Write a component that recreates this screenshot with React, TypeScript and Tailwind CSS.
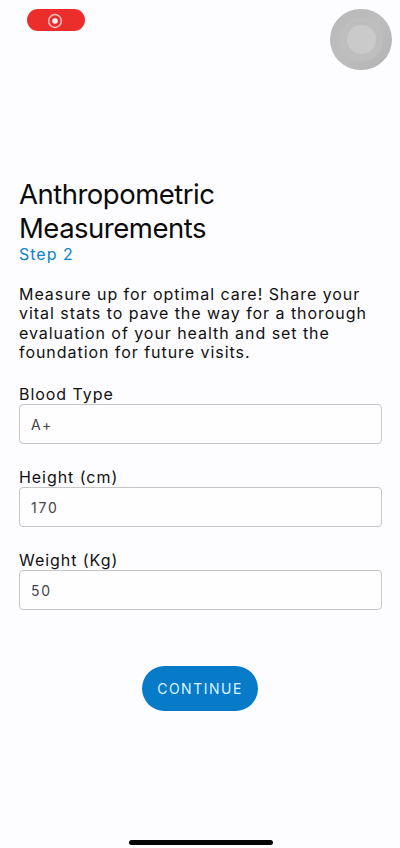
import React from "react";

type FieldProps = { id: string; label: string; value: string };

function Field({ id, label, value }: FieldProps) {
  return (
    <div className="flex h-[83px] flex-col">
      <label htmlFor={id} className="h-[19px] text-[16px] leading-[19px] tracking-[0.95px] text-[#111113]">
        {label}
      </label>
      <input
        id={id}
        defaultValue={value}
        className="h-10 w-full rounded-[4px] border border-[#c5c5ca] bg-[#fefdff] pl-[11px] text-[14px] tracking-[1.8px] text-[#444448] outline-none"
      />
    </div>
  );
}

export default function App() {
  return (
    <main className="flex h-[848px] w-[400px] flex-col overflow-hidden bg-[#fdfcfe] font-['Inter',sans-serif]">
      <header className="flex h-[177px] shrink-0 items-start justify-between pt-[9px] pr-2 pl-[27px]">
        <div className="flex h-[22px] w-[58px] items-center justify-center rounded-full bg-[#eb2d2b] pt-[2px] pr-[2px]">
          <svg width="16" height="16" viewBox="0 0 16 16" fill="none">
            <circle cx="8" cy="8" r="6.4" stroke="#ffc4bf" strokeWidth="1.5" />
            <circle cx="8" cy="8" r="2.8" fill="#fff3f1" />
          </svg>
        </div>
        <div className="flex h-[61px] w-[62px] items-center justify-center rounded-full bg-linear-to-br from-[#b9b9b9] via-[#bdbdbd] to-[#b3b3b3]">
          <div className="flex h-[44px] w-[44px] items-center justify-center rounded-full bg-[#bebebe]">
            <div className="h-[29px] w-[29px] rounded-full bg-[#cacaca]" />
          </div>
        </div>
      </header>

      <section className="flex flex-col pr-[18px] pl-[19px]">
        <h1 className="w-[240px] text-[27.5px] leading-[34px] tracking-[-0.5px] text-[#0b0b0c]">
          Anthropometric Measurements
        </h1>
        <p className="h-[40px] text-[16px] leading-[19px] tracking-[1px] text-[#0f83c8]">Step 2</p>
        <p className="h-[100px] text-[16px] leading-[19.4px] tracking-[0.95px] whitespace-nowrap text-[#111113]">
          Measure up for optimal care! Share your
          <br />
          vital stats to pave the way for a thorough
          <br />
          evaluation of your health and set the
          <br />
          foundation for future visits.
        </p>
        <Field id="blood" label="Blood Type" value="A+" />
        <Field id="height" label="Height (cm)" value="170" />
        <Field id="weight" label="Weight (Kg)" value="50" />
      </section>

      <button className="mt-[32px] ml-[142px] h-[45px] w-[116px] shrink-0 rounded-full bg-[#087bc8] pb-px text-[14px] tracking-[1.5px] text-[#d9f3ff]">
        CONTINUE
      </button>

      <div className="mt-auto mb-[3px] ml-[129px] h-[5px] w-[144px] shrink-0 rounded-full bg-[#050505]" />
    </main>
  );
}
